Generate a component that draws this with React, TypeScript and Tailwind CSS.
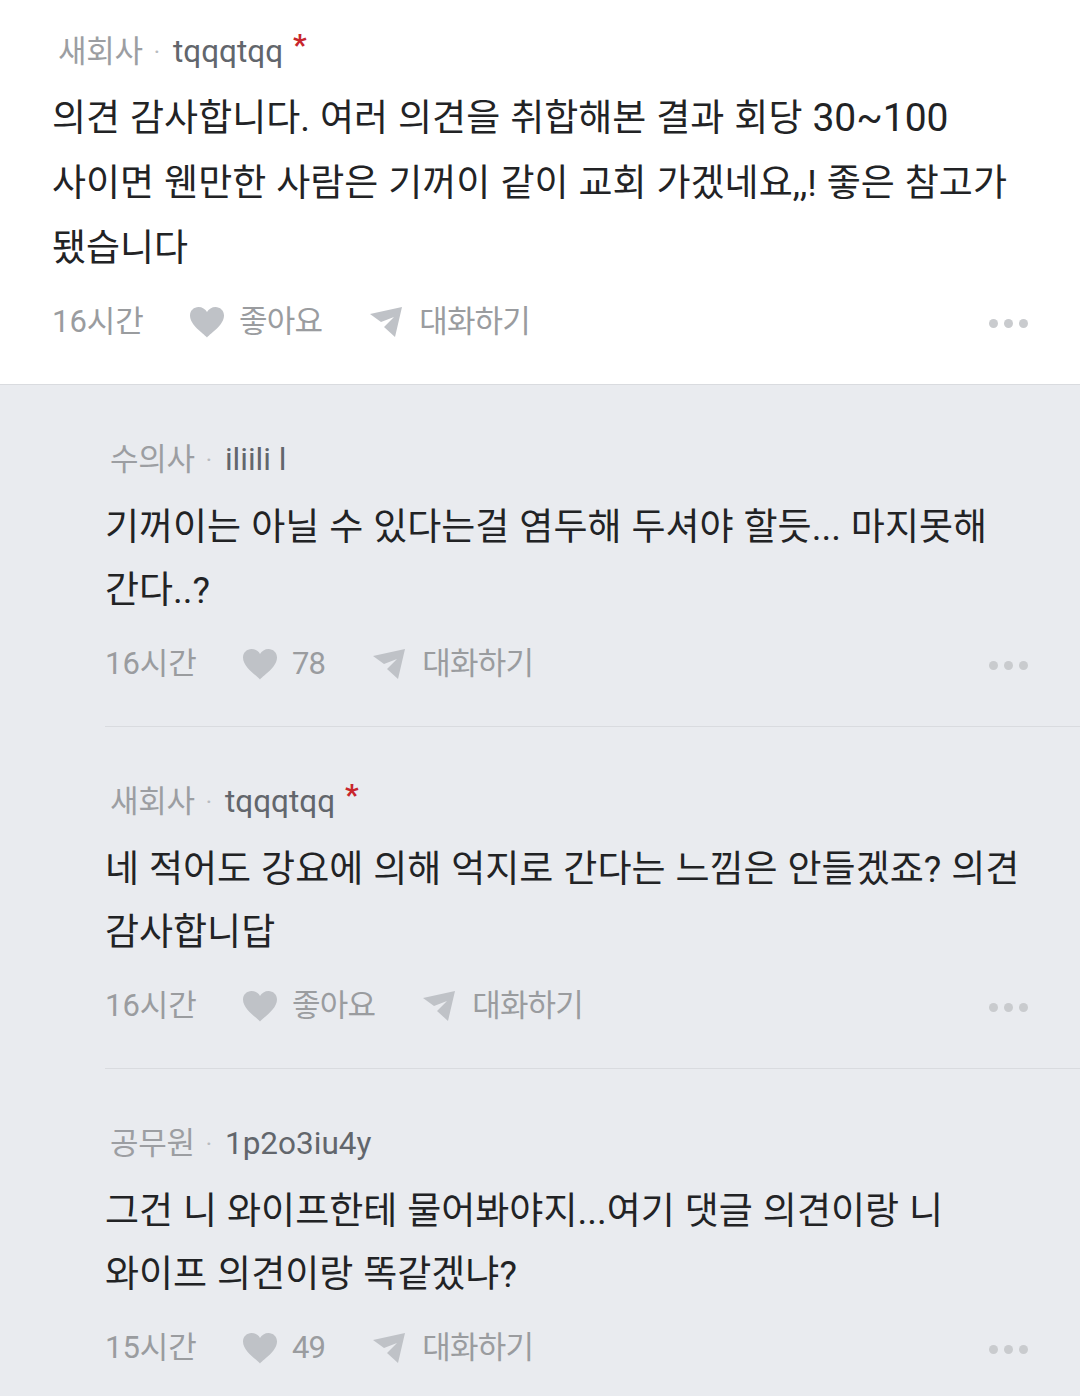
import React from "react";

const font = "font-['Roboto','Noto_Sans_CJK_KR','Noto_Sans',sans-serif]";

function Heart() {
  return (
    <svg width="36" height="32" viewBox="0 0 36 32" className="block shrink-0">
      <path d="M18 31.500 C14 27 1 19 1 9.500 C1 4.500 5 1 9.500 1 C13 1 16.500 3 18 6 C19.500 3 23 1 26.500 1 C31 1 35 4.500 35 9.500 C35 19 22 27 18 31.500 Z" fill="#bfc2c7" />
    </svg>
  );
}

function Plane() {
  return (
    <svg width="34" height="32" viewBox="0 0 34 32" className="block shrink-0">
      <path d="M1 8 L33 1 L26 31 L15 21 L25 11 L12 16 Z" fill="#bfc2c7" />
    </svg>
  );
}

type C = { job: string; nick: string; star?: boolean; lines: React.ReactNode[]; time: string; like: string };

function Comment({ c, nested }: { c: C; nested?: boolean }) {
  return (
    <div className={nested ? "pt-[52px]" : "pt-[29px]"}>
      <div className={`flex items-center h-[46px] text-[31px] leading-[46px] whitespace-nowrap ${nested ? "pl-[5px]" : "pl-[6px]"}`}>
        <span className="text-[#9c9ea2] tracking-[-0.3px]">{c.job}</span>
        <span className="text-[#b9bcc0] ml-[11px] mr-[13px] text-[24px]">·</span>
        <span className="text-[#62666c] text-[31.500px]">{c.nick}</span>
        {c.star && <span className="text-[#c8262c] text-[30px] ml-[10px] -mt-[14px] font-bold">*</span>}
      </div>
      <div className={`text-[37px] text-[#222325] [word-spacing:0.8px] ${nested ? "mt-[13px] leading-[63px]" : "mt-[11px] leading-[65px]"}`}>
        {c.lines.map((l, i) => (
          <div key={i} className="whitespace-nowrap">{l}</div>
        ))}
      </div>
      <div className={`flex items-center h-[46px] text-[31px] text-[#9a9c9f] whitespace-nowrap ${nested ? "mt-[19px]" : "mt-[18px]"}`}>
        <span className="w-[91px]">{c.time}</span>
        <span className="ml-[46px]"><Heart /></span>
        <span className="ml-[14px] tracking-[-0.8px]">{c.like}</span>
        <span className="ml-[47px]"><Plane /></span>
        <span className="ml-[16px] tracking-[-0.8px]">대화하기</span>
        <span className="ml-auto mr-[52px] mt-[2px] flex gap-[6px]">
          <i className="w-[9px] h-[9px] rounded-full bg-[#c9cbce]" />
          <i className="w-[9px] h-[9px] rounded-full bg-[#c9cbce]" />
          <i className="w-[9px] h-[9px] rounded-full bg-[#c9cbce]" />
        </span>
      </div>
    </div>
  );
}

export default function App() {
  return (
    <div className={`${font} w-[1080px] h-[1396px] overflow-hidden bg-[#e9ebef]`}>
      <div className="bg-white h-[385px] pl-[52px] border-b border-[#d9dbdf]">
        <Comment c={{ job: "새회사", nick: "tqqqtqq", star: true, lines: [<>의견 감사합니다. 여러 의견을 취합해본 결과 회당 <span className="text-[39px]">30~100</span></>, <>사이면 웬만한 사람은 기꺼이 같이 교회 가겠네요,,! 좋은 참고가</>, "됐습니다"], time: "16시간", like: "좋아요" }} />
      </div>
      <div className="pl-[105px]">
        <div className="h-[342px] border-b border-[#d9dbdf]">
          <Comment nested c={{ job: "수의사", nick: "iliili l", lines: ["기꺼이는 아닐 수 있다는걸 염두해 두셔야 할듯... 마지못해", "간다..?"], time: "16시간", like: "78" }} />
        </div>
        <div className="h-[342px] border-b border-[#d9dbdf]">
          <Comment nested c={{ job: "새회사", nick: "tqqqtqq", star: true, lines: ["네 적어도 강요에 의해 억지로 간다는 느낌은 안들겠죠? 의견", "감사합니답"], time: "16시간", like: "좋아요" }} />
        </div>
        <div>
          <Comment nested c={{ job: "공무원", nick: "1p2o3iu4y", lines: ["그건 니 와이프한테 물어봐야지...여기 댓글 의견이랑 니", "와이프 의견이랑 똑같겠냐?"], time: "15시간", like: "49" }} />
        </div>
      </div>
    </div>
  );
}
